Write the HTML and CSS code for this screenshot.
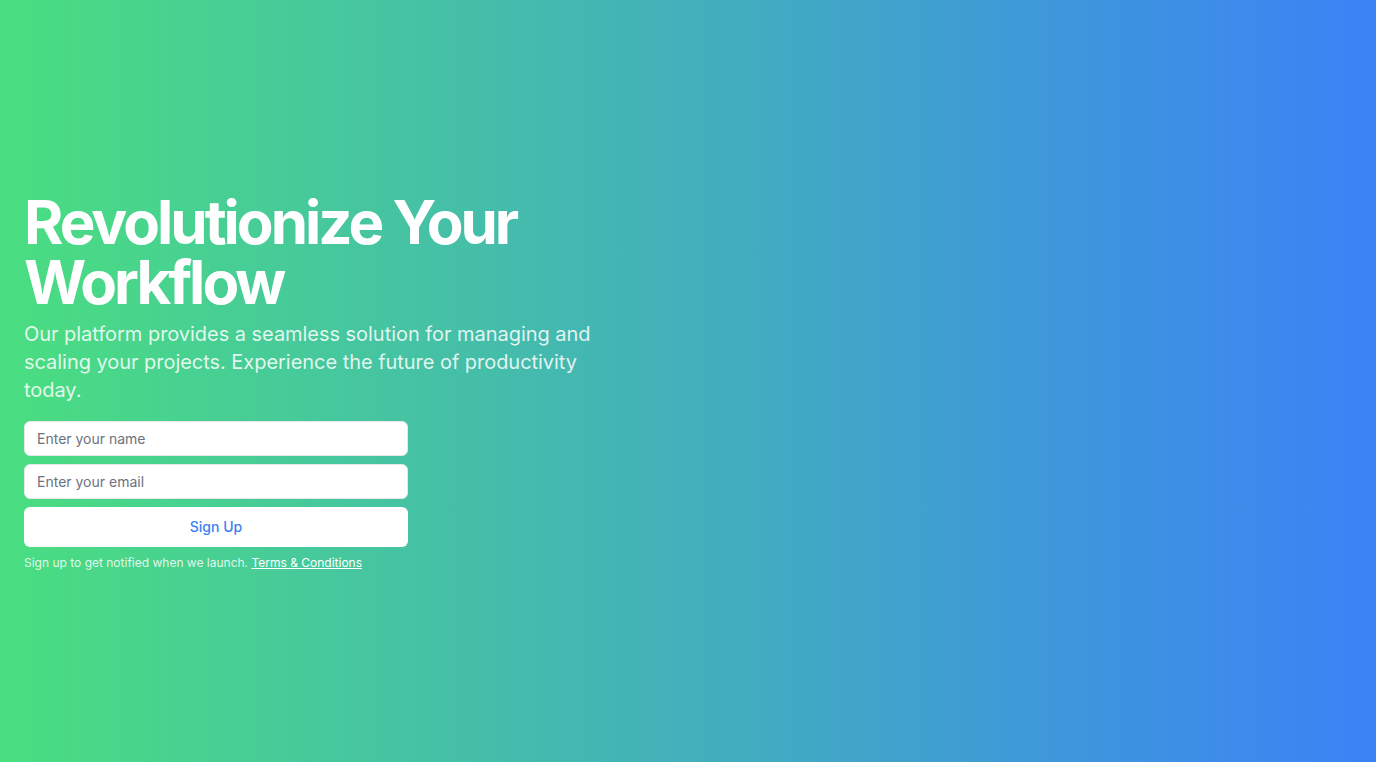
FILE: index.html
```html
<!DOCTYPE html>
<html lang="en">
<head>
<meta charset="utf-8">
<title>Revolutionize Your Workflow</title>
<link rel="stylesheet" href="styles.css">
</head>
<body>
<main class="hero">
  <div class="content">
    <h1 class="title">Revolutionize Your Workflow</h1>
    <p class="lead">Our platform provides a seamless solution for managing and scaling your projects. Experience the future of productivity today.</p>
    <form class="signup">
      <input class="field" type="text" placeholder="Enter your name">
      <input class="field" type="email" placeholder="Enter your email">
      <button class="btn" type="button">Sign Up</button>
    </form>
    <p class="note">Sign up to get notified when we launch. <a class="link" href="#">Terms &amp; Conditions</a></p>
  </div>
</main>
</body>
</html>
```
FILE: styles.css
```css
* { box-sizing: border-box; }
html, body { margin: 0; padding: 0; height: 100%; }
body {
  font-family: Inter, "Noto Sans", sans-serif;
  color: #fff;
}
.hero {
  min-height: 100vh;
  background: linear-gradient(to right, #4ade80, #3b82f6);
  display: flex;
  align-items: center;
  padding: 0 24px;
}
.content {
  width: 576px;
  display: flex;
  flex-direction: column;
}
.title {
  margin: 0 0 8px;
  font-size: 60px;
  line-height: 60px;
  font-weight: 700;
  letter-spacing: -0.05em;
  color: #fff;
}
.lead {
  margin: 0 0 17px;
  font-size: 20px;
  line-height: 28px;
  letter-spacing: -0.002em;
  color: rgba(255, 255, 255, 0.85);
}
.signup {
  width: 384px;
  display: flex;
  flex-direction: column;
  gap: 8px;
}
.field {
  height: 35px;
  border: 1px solid #e5e7eb;
  border-radius: 6px;
  padding: 0 12px;
  font-family: inherit;
  font-size: 14px;
  color: #111827;
  background: #fff;
  outline: none;
}
.field::placeholder { color: #6b7280; }
.btn {
  height: 40px;
  border: none;
  border-radius: 6px;
  background: #fff;
  color: #3b82f6;
  font-family: inherit;
  font-size: 14px;
  font-weight: 500;
  cursor: pointer;
}
.note {
  margin: 8px 0 0;
  font-size: 12px;
  line-height: 16px;
  color: rgba(255, 255, 255, 0.85);
}
.link {
  color: #fff;
  text-decoration: underline;
}
```
